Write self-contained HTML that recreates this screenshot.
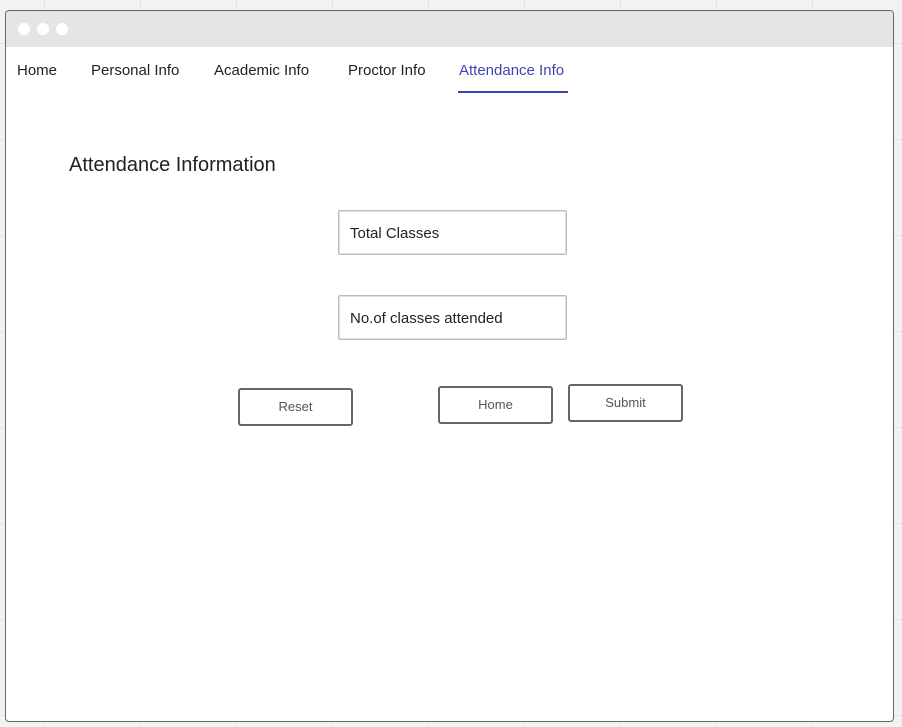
<!DOCTYPE html><html><head><style>
body{margin:0;width:902px;height:727px;position:relative;overflow:hidden;font-family:"Liberation Sans",sans-serif;
background-color:#f2f2f2;background-image:linear-gradient(90deg,#e4e4e4 1px,transparent 1px),linear-gradient(#e4e4e4 1px,transparent 1px);background-size:96px 96px;background-position:44px 43px}
.win{position:absolute;left:5px;top:10px;width:887px;height:710px;border:1px solid #666;border-radius:4px;background:#fff;overflow:hidden}
.bar{height:36px;background:#e5e5e5}
.dot{position:absolute;top:12px;width:12px;height:12px;border-radius:50%;background:#fff}
.n{position:absolute;top:51px;font-size:15px;color:#222}
.inp{position:absolute;left:332px;width:229px;height:45px;border:1px solid #bbb;border-radius:2px;box-shadow:inset 0 0 0 1px #e0e0e0;font-size:15px;color:#222;line-height:45px;padding-left:11px;box-sizing:border-box}
.btn{position:absolute;width:115px;height:38px;border:2px solid #666;border-radius:3px;box-sizing:border-box;text-align:center;line-height:34px;font-size:13px;color:#555}
</style></head><body><div class="win"><div class="bar"></div>
<div class="dot" style="left:12px"></div><div class="dot" style="left:31px"></div><div class="dot" style="left:50px"></div>
<div class="n" style="left:11px">Home</div><div class="n" style="left:85px">Personal Info</div><div class="n" style="left:208px">Academic Info</div><div class="n" style="left:342px">Proctor Info</div><div class="n" style="left:453px;color:#3d45b5">Attendance Info</div>
<div style="position:absolute;left:452px;top:80px;width:110px;height:2px;background:#3d45b5"></div>
<div style="position:absolute;left:63px;top:143px;font-size:20px;color:#222">Attendance Information</div>
<div class="inp" style="top:199px">Total Classes</div>
<div class="inp" style="top:284px">No.of classes attended</div>
<div class="btn" style="left:232px;top:377px">Reset</div>
<div class="btn" style="left:432px;top:375px">Home</div>
<div class="btn" style="left:562px;top:373px">Submit</div>
</div></body></html>
